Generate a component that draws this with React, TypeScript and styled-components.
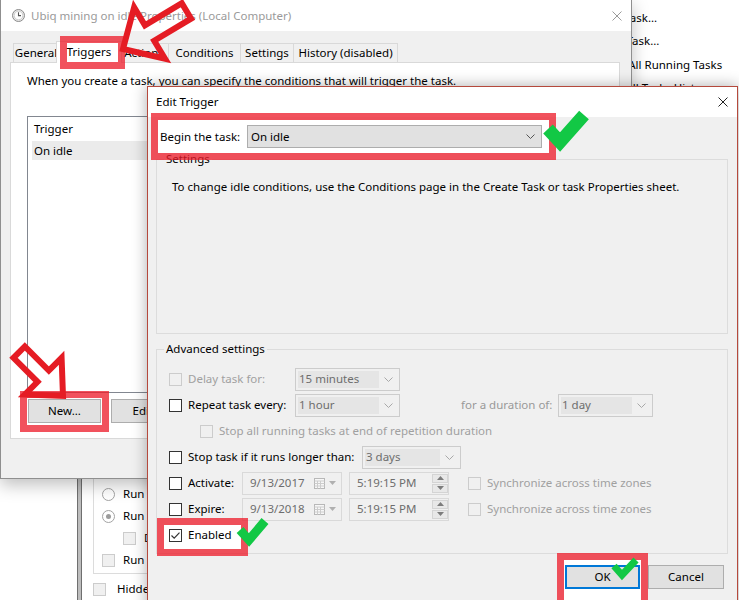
import React from "react";
import styled, { createGlobalStyle, css } from "styled-components";

const GlobalStyle = createGlobalStyle`
  *, *::before, *::after { box-sizing: border-box; }
  html, body { margin: 0; padding: 0; background: #ffffff; }
  body {
    font-family: "Noto Sans", "Segoe UI", sans-serif;
    font-size: 11.5px;
    line-height: 16px;
    color: #000;
  }
`;

const Desktop = styled.div`
  position: relative;
  width: 739px;
  height: 600px;
  overflow: hidden;
  background: #fff;
`;

/* red highlight frame drawn round a control */
type Sides = [number, number, number, number];

const Frame = styled.span<{ $o: Sides }>`
  position: absolute;
  top: ${(p) => -p.$o[0]}px;
  right: ${(p) => -p.$o[1]}px;
  bottom: ${(p) => -p.$o[2]}px;
  left: ${(p) => -p.$o[3]}px;
  z-index: -1;
  border: 7px solid rgba(236, 28, 42, 0.76);
  background: #fff;
  background-clip: padding-box;
  pointer-events: none;
`;

const Marked = styled.span`
  position: relative;
  isolation: isolate;
  display: inline-flex;
  align-self: flex-start;
`;

/* ---------- task scheduler window behind the dialogs ---------- */

const Scheduler = styled.div`
  position: absolute;
  inset: 0;
  display: grid;
  grid-template-columns: 77px 5px 66px 438px 153px;
`;

const NavPane = styled.div`
  background: #fff;
`;

const Workspace = styled.div`
  background: #fff;
`;

const Splitter = styled.div`
  border-left: 1px solid #6f6f6f;
  border-right: 1px solid #6f6f6f;
  background: #bdbdbd;
`;

const GeneralPane = styled.div`
  display: flex;
  flex-direction: column;
  padding: 440px 0 0 11px;
  overflow: hidden;
  white-space: nowrap;
`;

const SecurityGroup = styled.div`
  width: 100%;
  height: 138px;
  border: 1px solid #dcdcdc;
  padding: 42px 0 0 8px;
  display: flex;
  flex-direction: column;
`;

const OptionLine = styled.div<{ $indent?: number; $gap?: number; $mt?: number }>`
  display: flex;
  align-items: center;
  height: 22px;
  gap: ${(p) => p.$gap ?? 8}px;
  padding-left: ${(p) => p.$indent ?? 0}px;
  margin-top: ${(p) => p.$mt ?? 0}px;
`;

const PaneLabel = styled.span`
  min-width: 0;
  overflow: hidden;
  white-space: nowrap;
`;

const Radio = styled.span<{ $on?: boolean }>`
  flex: none;
  width: 13px;
  height: 13px;
  border-radius: 50%;
  border: 1px solid #a3a3a3;
  background: #fff;
  display: inline-flex;
  align-items: center;
  justify-content: center;
  &::after {
    content: "";
    width: 5px;
    height: 5px;
    border-radius: 50%;
    background: ${(p) => (p.$on ? "#9c9c9c" : "transparent")};
  }
`;

const ActionsPane = styled.ul`
  list-style: none;
  margin: 0;
  padding: 6px 0 0;
  white-space: nowrap;
  overflow: hidden;
`;

const ActionItem = styled.li`
  height: 23.3px;
  line-height: 23px;
`;

/* ---------- shared window parts ---------- */

const TitleBar = styled.div<{ $dim?: boolean; $h: number; $pl: number }>`
  flex: none;
  height: ${(p) => p.$h}px;
  display: flex;
  align-items: center;
  gap: 6px;
  padding: 0 9px 0 ${(p) => p.$pl}px;
  background: #fff;
  color: ${(p) => (p.$dim ? "#9a9a9a" : "#000")};
  white-space: nowrap;
`;

const CloseButton = styled.span`
  margin-left: auto;
  display: inline-flex;
`;

const PushButton = styled.button<{ $w: number; $default?: boolean }>`
  flex: none;
  width: ${(p) => p.$w}px;
  height: 24px;
  padding: 0;
  border: 1px solid #adadad;
  background: #e1e1e1;
  font: inherit;
  color: #000;
  ${(p) =>
    p.$default &&
    css`
      border: 2px solid #0078d7;
    `}
`;

/* ---------- properties dialog ---------- */

const PropertiesDialog = styled.div`
  position: absolute;
  left: 0;
  top: -1px;
  width: 632px;
  height: 480px;
  display: flex;
  flex-direction: column;
  border: 1px solid #8f8f8f;
  background: #f0f0f0;
  box-shadow: 0 6px 16px rgba(0, 0, 0, 0.25);
`;

const PropertiesBody = styled.div`
  flex: 1;
  display: flex;
  flex-direction: column;
  padding: 12px 11px 0 9px;
`;

const TabStrip = styled.div`
  display: flex;
  height: 19px;
  padding-left: 3px;
  position: relative;
  z-index: 1;
`;

const Tab = styled.div<{ $w: number; $active?: boolean }>`
  position: relative;
  flex: none;
  width: ${(p) => p.$w}px;
  height: 19px;
  margin-left: -1px;
  border: 1px solid #d9d9d9;
  border-bottom: none;
  background: #f0f0f0;
  text-align: center;
  line-height: 17px;
  white-space: nowrap;
  &:first-child {
    margin-left: 0;
  }
  ${(p) =>
    p.$active &&
    css`
      isolation: isolate;
      z-index: 1;
      height: 22px;
      margin: -2px -2px -1px -3px;
      background: #fff;
      line-height: 20px;
    `}
`;

const TabPanel = styled.div`
  width: 610px;
  height: 377px;
  display: flex;
  flex-direction: column;
  align-items: flex-start;
  padding: 10px 0 0 16px;
  border: 1px solid #d9d9d9;
  background: #fff;
  white-space: nowrap;
`;

const ListBox = styled.div`
  width: 580px;
  height: 277px;
  margin-top: 27px;
  border: 1px solid #828790;
`;

const ListHeader = styled.div`
  height: 24px;
  line-height: 24px;
  padding-left: 6px;
`;

const ListRow = styled.div<{ $selected?: boolean }>`
  height: 19px;
  line-height: 19px;
  margin-left: 4px;
  padding-left: 2px;
  background: ${(p) => (p.$selected ? "#ebebeb" : "transparent")};
`;

const ButtonRow = styled.div`
  display: flex;
  gap: 10px;
  margin-top: 6px;
  padding-left: 1px;
`;

/* ---------- edit trigger dialog ---------- */

const TriggerDialog = styled.div`
  position: absolute;
  left: 147px;
  top: 86px;
  width: 591px;
  height: 540px;
  display: flex;
  flex-direction: column;
  border: 1px solid #b5493c;
  background: #f0f0f0;
  box-shadow: 0 0 14px rgba(0, 0, 0, 0.32);
`;

const TriggerBody = styled.div`
  flex: 1;
  display: flex;
  flex-direction: column;
  padding: 8px 9px 0 8px;
  white-space: nowrap;
`;

const BeginMark = styled(Marked)`
  margin-left: 4px;
`;

const BeginRow = styled.div`
  display: grid;
  grid-template-columns: 87px 295px;
  align-items: center;
  height: 23px;
`;

const BeginSelect = styled.div`
  height: 23px;
  display: flex;
  align-items: center;
  justify-content: space-between;
  padding: 0 6px 0 3px;
  border: 1px solid #adadad;
  background: #e1e1e1;
`;

const GroupBox = styled.fieldset<{ $h: number; $mt: number }>`
  min-width: 0;
  height: ${(p) => p.$h}px;
  margin: ${(p) => p.$mt}px 0 0;
  padding: 0;
  border: 1px solid #dcdcdc;
`;

const GroupLegend = styled.legend`
  margin-left: 7px;
  padding: 0 2px;
  line-height: 16px;
`;

const SettingsNote = styled.div`
  margin: 12px 0 0 15px;
`;

const OptionStack = styled.div`
  display: flex;
  flex-direction: column;
  gap: 4px;
  padding: 11px 0 0 12px;
`;

const OptionRow = styled.div<{ $indent?: number }>`
  display: flex;
  align-items: center;
  height: 22px;
  padding-left: ${(p) => p.$indent ?? 0}px;
`;

const CheckItem = styled.label<{ $w?: number; $off?: boolean; $ml?: number }>`
  flex: none;
  display: flex;
  align-items: center;
  gap: 6px;
  height: 22px;
  width: ${(p) => (p.$w ? `${p.$w}px` : "auto")};
  margin-left: ${(p) => p.$ml ?? 0}px;
  color: ${(p) => (p.$off ? "#a0a0a0" : "#000")};
`;

const CheckBox = styled.span<{ $off?: boolean }>`
  flex: none;
  width: 13px;
  height: 13px;
  display: inline-flex;
  align-items: center;
  justify-content: center;
  border: 1px solid ${(p) => (p.$off ? "#cccccc" : "#333333")};
  background: ${(p) => (p.$off ? "#f0f0f0" : "#fff")};
`;

const FieldLabel = styled.span<{ $w: number; $ml: number }>`
  flex: none;
  width: ${(p) => p.$w}px;
  margin-left: ${(p) => p.$ml}px;
  color: #999;
`;

const Select = styled.div<{ $w: number }>`
  flex: none;
  width: ${(p) => p.$w}px;
  height: 23px;
  display: flex;
  padding: 2px;
  border: 1px solid #cccccc;
  background: #f0f0f0;
  color: #6d6d6d;
`;

const SelectValue = styled.span`
  flex: 1;
  display: flex;
  align-items: center;
  padding-left: 1px;
  background: #e5e5e5;
`;

const SelectArrow = styled.span`
  flex: none;
  width: 18px;
  display: flex;
  align-items: center;
  justify-content: center;
`;

const Field = styled.div<{ $w: number; $ml?: number }>`
  flex: none;
  width: ${(p) => p.$w}px;
  height: 23px;
  margin-left: ${(p) => p.$ml ?? 0}px;
  display: flex;
  align-items: center;
  padding-left: 7px;
  border: 1px solid #d9d9d9;
  background: #f0f0f0;
  color: #6d6d6d;
`;

const Picker = styled.span`
  margin-left: auto;
  margin-right: 5px;
  display: flex;
  align-items: center;
  gap: 4px;
`;

const Spin = styled.span`
  margin-left: auto;
  display: flex;
  flex-direction: column;
  gap: 1px;
`;

const SpinPart = styled.span`
  width: 16px;
  height: 9px;
  display: flex;
  align-items: center;
  justify-content: center;
  border: 1px solid #d4d4d4;
  background: #e8e8e8;
`;

const Footer = styled.div`
  display: flex;
  justify-content: flex-end;
  gap: 8px;
  margin-top: 11px;
  padding-right: 4px;
`;

const Overlay = styled.svg`
  position: absolute;
  inset: 0;
  z-index: 10;
  pointer-events: none;
`;

/* ---------- small drawings ---------- */

const Chevron = ({ color = "#8a8a8a" }: { color?: string }) => (
  <svg width="9" height="5" viewBox="0 0 9 5">
    <path d="M0.5 0.5 L4.5 4.5 L8.5 0.5" fill="none" stroke={color} />
  </svg>
);

const CloseGlyph = ({ color }: { color: string }) => (
  <svg width="10" height="10" viewBox="0 0 10 10">
    <path d="M0.5 0.5 L9.5 9.5 M9.5 0.5 L0.5 9.5" stroke={color} strokeWidth="1" />
  </svg>
);

const ClockIcon = () => (
  <svg width="13" height="13" viewBox="0 0 13 13">
    <circle cx="6.5" cy="6.5" r="6" fill="#e9e9e9" stroke="#8a8a8a" />
    <circle cx="6.5" cy="6.5" r="4.3" fill="#fff" stroke="#c4c4c4" strokeWidth="0.8" />
    <path d="M6.5 3.2 V6.6 H9" fill="none" stroke="#555" strokeWidth="1.1" />
  </svg>
);

const TickMark = () => (
  <svg width="11" height="11" viewBox="0 0 11 11">
    <path d="M1.5 5.5 L4.2 8.2 L9.5 2.6" fill="none" stroke="#333" strokeWidth="1.2" />
  </svg>
);

const CalendarIcon = () => (
  <svg width="11" height="11" viewBox="0 0 11 11">
    <rect x="0.5" y="0.5" width="10" height="10" fill="#f7f7f7" stroke="#b8b8b8" />
    <path d="M0.5 3 H10.5 M3.5 3 V10.5 M6.5 3 V10.5 M0.5 5.5 H10.5 M0.5 8 H10.5" stroke="#cdcdcd" />
  </svg>
);

const DropTriangle = () => (
  <svg width="7" height="4" viewBox="0 0 7 4">
    <path d="M0 0 H7 L3.5 4 Z" fill="#b0b0b0" />
  </svg>
);

const SpinTriangle = ({ up }: { up?: boolean }) => (
  <svg width="7" height="4" viewBox="0 0 7 4">
    <path d={up ? "M0 4 H7 L3.5 0 Z" : "M0 0 H7 L3.5 4 Z"} fill="#7c7c7c" />
  </svg>
);

type ArrowProps = { x: number; y: number; angle: number; head: number; wing: number; shaft: number; length: number };

function Arrow({ x, y, angle, head, wing, shaft, length }: ArrowProps) {
  const points = [
    [0, 0],
    [-head, -wing],
    [-head, -shaft],
    [-length, -shaft],
    [-length, shaft],
    [-head, shaft],
    [-head, wing],
  ]
    .map((p) => p.join(","))
    .join(" ");
  return (
    <polygon
      points={points}
      transform={`translate(${x} ${y}) rotate(${angle})`}
      fill="none"
      stroke="#e51c24"
      strokeWidth={6}
      strokeLinejoin="miter"
    />
  );
}

const Tick = ({ points, width }: { points: string; width: number }) => (
  <polyline points={points} fill="none" stroke="#12c845" strokeWidth={width} strokeLinejoin="miter" />
);

function Check({ label, w, off, checked, ml }: { label: string; w?: number; off?: boolean; checked?: boolean; ml?: number }) {
  return (
    <CheckItem $w={w} $off={off} $ml={ml}>
      <CheckBox $off={off}>{checked && <TickMark />}</CheckBox>
      <span>{label}</span>
    </CheckItem>
  );
}

function Combo({ w, value }: { w: number; value: string }) {
  return (
    <Select $w={w}>
      <SelectValue>{value}</SelectValue>
      <SelectArrow>
        <Chevron color="#a8a8a8" />
      </SelectArrow>
    </Select>
  );
}

function DateBox({ value }: { value: string }) {
  return (
    <Field $w={100}>
      {value}
      <Picker>
        <CalendarIcon />
        <DropTriangle />
      </Picker>
    </Field>
  );
}

function TimeBox({ value }: { value: string }) {
  return (
    <Field $w={100} $ml={7}>
      {value}
      <Spin>
        <SpinPart>
          <SpinTriangle up />
        </SpinPart>
        <SpinPart>
          <SpinTriangle />
        </SpinPart>
      </Spin>
    </Field>
  );
}

export default function App() {
  return (
    <>
      <GlobalStyle />
      <Desktop>
        <Scheduler>
          <NavPane />
          <Splitter />
          <GeneralPane>
            <SecurityGroup>
              <OptionLine>
                <Radio />
                <PaneLabel>Run only when user is logged on</PaneLabel>
              </OptionLine>
              <OptionLine>
                <Radio $on />
                <PaneLabel>Run whether user is logged on or not</PaneLabel>
              </OptionLine>
              <OptionLine $indent={21}>
                <CheckBox $off />
                <PaneLabel>Do not store password.</PaneLabel>
              </OptionLine>
              <OptionLine>
                <CheckBox $off />
                <PaneLabel>Run with highest privileges</PaneLabel>
              </OptionLine>
            </SecurityGroup>
            <OptionLine $gap={11} $mt={5}>
              <CheckBox $off />
              <PaneLabel>Hidden</PaneLabel>
            </OptionLine>
          </GeneralPane>
          <Workspace />
          <ActionsPane>
            <ActionItem>Create Task...</ActionItem>
            <ActionItem>Import Task...</ActionItem>
            <ActionItem>Display All Running Tasks</ActionItem>
            <ActionItem>Enable All Tasks History</ActionItem>
          </ActionsPane>
        </Scheduler>

        <PropertiesDialog>
          <TitleBar $dim $h={31} $pl={11}>
            <ClockIcon />
            <span>Ubiq mining on idle Properties (Local Computer)</span>
            <CloseButton>
              <CloseGlyph color="#9a9a9a" />
            </CloseButton>
          </TitleBar>
          <PropertiesBody>
            <TabStrip>
              <Tab $w={46}>General</Tab>
              <Tab $w={66} $active>
                <Frame $o={[6, 4, 6, -3]} />
                Triggers
              </Tab>
              <Tab $w={50}>Actions</Tab>
              <Tab $w={73}>Conditions</Tab>
              <Tab $w={54}>Settings</Tab>
              <Tab $w={105}>History (disabled)</Tab>
            </TabStrip>
            <TabPanel>
              <div>When you create a task, you can specify the conditions that will trigger the task.</div>
              <ListBox>
                <ListHeader>Trigger</ListHeader>
                <ListRow $selected>On idle</ListRow>
              </ListBox>
              <ButtonRow>
                <Marked>
                  <Frame $o={[8, 8, 9, 8]} />
                  <PushButton $w={73}>New...</PushButton>
                </Marked>
                <PushButton $w={73}>Edit...</PushButton>
              </ButtonRow>
            </TabPanel>
          </PropertiesBody>
        </PropertiesDialog>

        <TriggerDialog>
          <TitleBar $h={30} $pl={8}>
            <span>Edit Trigger</span>
            <CloseButton>
              <CloseGlyph color="#222" />
            </CloseButton>
          </TitleBar>
          <TriggerBody>
            <BeginMark>
              <Frame $o={[12, 14, 12, 9]} />
              <BeginRow>
                <span>Begin the task:</span>
                <BeginSelect>
                  <span>On idle</span>
                  <Chevron color="#555" />
                </BeginSelect>
              </BeginRow>
            </BeginMark>

            <GroupBox $h={183} $mt={3}>
              <GroupLegend>Settings</GroupLegend>
              <SettingsNote>
                To change idle conditions, use the Conditions page in the Create Task or task Properties sheet.
              </SettingsNote>
            </GroupBox>

            <GroupBox $h={213} $mt={7}>
              <GroupLegend>Advanced settings</GroupLegend>
              <OptionStack>
                <OptionRow>
                  <Check label="Delay task for:" w={126} off />
                  <Combo w={105} value="15 minutes" />
                </OptionRow>
                <OptionRow>
                  <Check label="Repeat task every:" w={126} />
                  <Combo w={105} value="1 hour" />
                  <FieldLabel $w={97} $ml={61}>
                    for a duration of:
                  </FieldLabel>
                  <Combo w={95} value="1 day" />
                </OptionRow>
                <OptionRow $indent={31}>
                  <Check label="Stop all running tasks at end of repetition duration" off />
                </OptionRow>
                <OptionRow>
                  <Check label="Stop task if it runs longer than:" w={193} />
                  <Combo w={99} value="3 days" />
                </OptionRow>
                <OptionRow>
                  <Check label="Activate:" w={73} />
                  <DateBox value="9/13/2017" />
                  <TimeBox value="5:19:15 PM" />
                  <Check label="Synchronize across time zones" off ml={19} />
                </OptionRow>
                <OptionRow>
                  <Check label="Expire:" w={73} />
                  <DateBox value="9/13/2018" />
                  <TimeBox value="5:19:15 PM" />
                  <Check label="Synchronize across time zones" off ml={19} />
                </OptionRow>
                <OptionRow>
                  <Marked>
                    <Frame $o={[6, 19, 10, 12]} />
                    <Check label="Enabled" w={60} checked />
                  </Marked>
                </OptionRow>
              </OptionStack>
            </GroupBox>

            <Footer>
              <Marked>
                <Frame $o={[12, 8, 40, 8]} />
                <PushButton $w={75} $default>
                  OK
                </PushButton>
              </Marked>
              <PushButton $w={76}>Cancel</PushButton>
            </Footer>
          </TriggerBody>
        </TriggerDialog>

        <Overlay width="739" height="600" viewBox="0 0 739 600">
          <Arrow x={123} y={49} angle={149} head={31} wing={30} shaft={9} length={74} />
          <Arrow x={63} y={396} angle={45} head={28} wing={26} shaft={8} length={62} />
          <Tick points="548,129 560,142 584,115" width={13} />
          <Tick points="240,530 249,540 265,521" width={9} />
          <Tick points="614,566 622,575 636,560" width={7} />
        </Overlay>
      </Desktop>
    </>
  );
}
